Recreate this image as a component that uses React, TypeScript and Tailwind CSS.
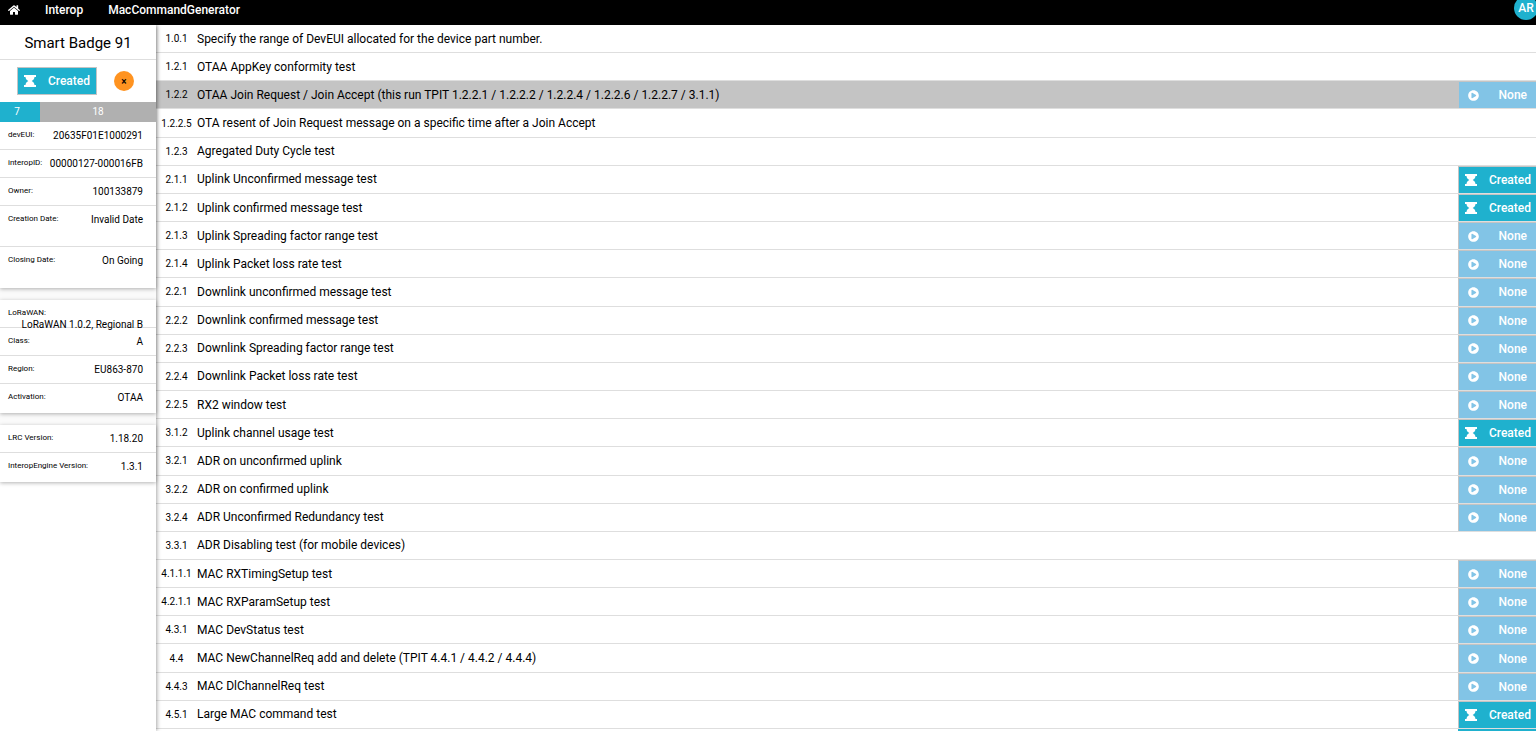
import { FaHome, FaPlayCircle } from 'react-icons/fa';

type Status = 'created' | 'none';

interface Test {
    code: string;
    name: string;
    status?: Status;
    selected?: boolean;
}

interface Detail {
    label: string;
    value: string;
    tall?: boolean;
    stacked?: boolean;
}

const tests: Test[] = [
    { code: '1.0.1', name: 'Specify the range of DevEUI allocated for the device part number.' },
    { code: '1.2.1', name: 'OTAA AppKey conformity test' },
    {
        code: '1.2.2',
        name: 'OTAA Join Request / Join Accept (this run TPIT 1.2.2.1 / 1.2.2.2 / 1.2.2.4 / 1.2.2.6 / 1.2.2.7 / 3.1.1)',
        status: 'none',
        selected: true,
    },
    { code: '1.2.2.5', name: 'OTA resent of Join Request message on a specific time after a Join Accept' },
    { code: '1.2.3', name: 'Agregated Duty Cycle test' },
    { code: '2.1.1', name: 'Uplink Unconfirmed message test', status: 'created' },
    { code: '2.1.2', name: 'Uplink confirmed message test', status: 'created' },
    { code: '2.1.3', name: 'Uplink Spreading factor range test', status: 'none' },
    { code: '2.1.4', name: 'Uplink Packet loss rate test', status: 'none' },
    { code: '2.2.1', name: 'Downlink unconfirmed message test', status: 'none' },
    { code: '2.2.2', name: 'Downlink confirmed message test', status: 'none' },
    { code: '2.2.3', name: 'Downlink Spreading factor range test', status: 'none' },
    { code: '2.2.4', name: 'Downlink Packet loss rate test', status: 'none' },
    { code: '2.2.5', name: 'RX2 window test', status: 'none' },
    { code: '3.1.2', name: 'Uplink channel usage test', status: 'created' },
    { code: '3.2.1', name: 'ADR on unconfirmed uplink', status: 'none' },
    { code: '3.2.2', name: 'ADR on confirmed uplink', status: 'none' },
    { code: '3.2.4', name: 'ADR Unconfirmed Redundancy test', status: 'none' },
    { code: '3.3.1', name: 'ADR Disabling test (for mobile devices)' },
    { code: '4.1.1.1', name: 'MAC RXTimingSetup test', status: 'none' },
    { code: '4.2.1.1', name: 'MAC RXParamSetup test', status: 'none' },
    { code: '4.3.1', name: 'MAC DevStatus test', status: 'none' },
    { code: '4.4', name: 'MAC NewChannelReq add and delete (TPIT 4.4.1 / 4.4.2 / 4.4.4)', status: 'none' },
    { code: '4.4.3', name: 'MAC DlChannelReq test', status: 'none' },
    { code: '4.5.1', name: 'Large MAC command test', status: 'created' },
];

const campaign: Detail[] = [
    { label: 'devEUI:', value: '20635F01E1000291' },
    { label: 'interopID:', value: '00000127-000016FB' },
    { label: 'Owner:', value: '100133879' },
    { label: 'Creation Date:', value: 'Invalid Date', tall: true },
    { label: 'Closing Date:', value: 'On Going', tall: true },
];

const device: Detail[] = [
    { label: 'LoRaWAN:', value: 'LoRaWAN 1.0.2, Regional B', stacked: true },
    { label: 'Class:', value: 'A' },
    { label: 'Region:', value: 'EU863-870' },
    { label: 'Activation:', value: 'OTAA' },
];

const versions: Detail[] = [
    { label: 'LRC Version:', value: '1.18.20' },
    { label: 'InteropEngine Version:', value: '1.3.1' },
];

function HourglassIcon() {
    return (
        <svg viewBox="0 0 12 12" className="h-3 w-3" fill="currentColor" aria-hidden="true">
            <path d="M0 0h12v2H0zM0 10h12v2H0zM1.5 2h9c0 2-1.4 3.2-2.8 4 1.400.8 2.800 2 2.800 4h-9c0-2 1.400-3.200 2.800-4C2.900 5.200 1.500 4 1.500 2z" />
        </svg>
    );
}

function DetailList({ items }: { items: Detail[] }) {
    return (
        <dl className="divide-y divide-[#dedede]">
            {items.map((item) => (
                <div
                    key={item.label}
                    className={`flex justify-between pt-2 pr-[13px] pl-2 ${item.tall ? 'h-[41px]' : 'h-7'} ${item.stacked ? 'flex-col' : ''}`}
                >
                    <dt className="text-[8px] leading-[10px]">{item.label}</dt>
                    <dd
                        className={`text-[10px] leading-3 whitespace-nowrap ${item.stacked ? '-mb-1 self-end' : ''}`}
                    >
                        {item.value}
                    </dd>
                </div>
            ))}
        </dl>
    );
}

function StatusButton({ status }: { status: Status }) {
    if (status === 'created') {
        return (
            <button className="flex w-full items-center justify-between border-t border-l border-[#c4c4c4] bg-[#1fb1ce] pr-[5px] pl-1.5 text-xs font-medium text-white">
                <HourglassIcon />
                Created
            </button>
        );
    }
    return (
        <button className="flex w-full items-center justify-between border-t border-l border-[#c4c4c4] bg-[#82c4e6] pr-[9px] pl-[9px] text-xs font-medium text-white">
            <FaPlayCircle className="size-[11px]" />
            None
        </button>
    );
}

export default function App() {
    return (
        <div className="flex h-screen flex-col overflow-hidden bg-white font-['Roboto',sans-serif] text-black">
            <header className="flex h-[25px] shrink-0 justify-between bg-black text-xs font-medium text-white">
                <nav className="flex h-5 items-center">
                    <a href="#home" aria-label="Home" className="pl-2">
                        <FaHome className="size-3" />
                    </a>
                    <a href="#interop" className="pl-[25px]">Interop</a>
                    <a href="#generator" className="pl-[25px]">MacCommandGenerator</a>
                </nav>
                <button className="-mt-1 -mr-0.5 flex size-6 items-center justify-center rounded-full bg-[#1fb1ce]">
                    AR
                </button>
            </header>

            <div className="flex min-h-0 flex-1">
                <aside className="z-10 w-[156px] shrink-0 shadow-[1px_0_4px_rgba(0,0,0,0.35)]">
                    <div className="space-y-3 bg-[#fafafa]">
                        <section className="bg-white shadow-[0_1px_4px_rgba(0,0,0,0.3)]">
                            <h1 className="flex h-[35px] items-center justify-center border-b border-[#dedede] pt-px text-[15px] leading-5">
                                Smart Badge 91
                            </h1>
                            <div className="flex h-[42px] items-center pl-[17px]">
                                <button className="flex h-7 w-20 items-center justify-between border border-[#c4c4c4] bg-[#1fb1ce] px-1.5 text-xs font-medium text-white">
                                    <HourglassIcon />
                                    Created
                                </button>
                                <button
                                    aria-label="Close"
                                    className="ml-[17px] flex size-5 items-center justify-center rounded-full bg-[#ff9320] text-[10px] font-medium"
                                >
                                    ×
                                </button>
                            </div>
                            <div className="flex h-5 text-[10px] leading-5 text-white">
                                <span className="w-10 bg-[#1fb1ce] pr-1.5 text-center">7</span>
                                <span className="flex-1 bg-[#b0b0b0] text-center">18</span>
                            </div>
                            <DetailList items={campaign} />
                        </section>
                        <section className="bg-white pb-px shadow-[0_1px_4px_rgba(0,0,0,0.3)]">
                            <DetailList items={device} />
                        </section>
                        <section className="bg-white pb-px shadow-[0_1px_4px_rgba(0,0,0,0.3)]">
                            <DetailList items={versions} />
                        </section>
                    </div>
                </aside>

                <main className="flex min-w-0 flex-1 flex-col">
                    <ul className="flex flex-1 flex-col">
                        {tests.map((test) => (
                            <li
                                key={test.code}
                                className={`flex min-h-7 flex-1 border-b border-[#dedede] ${test.selected ? 'bg-[#c4c4c4]' : ''}`}
                            >
                                <span className="flex w-[41px] items-center justify-center text-[10px]">{test.code}</span>
                                <span className="flex flex-1 items-center text-xs">{test.name}</span>
                                {test.status && (
                                    <div className="flex w-[78px]">
                                        <StatusButton status={test.status} />
                                    </div>
                                )}
                            </li>
                        ))}
                    </ul>
                    <div className="h-0.5 w-[78px] shrink-0 self-end bg-[#1fb1ce]" />
                </main>
            </div>
        </div>
    );
}
